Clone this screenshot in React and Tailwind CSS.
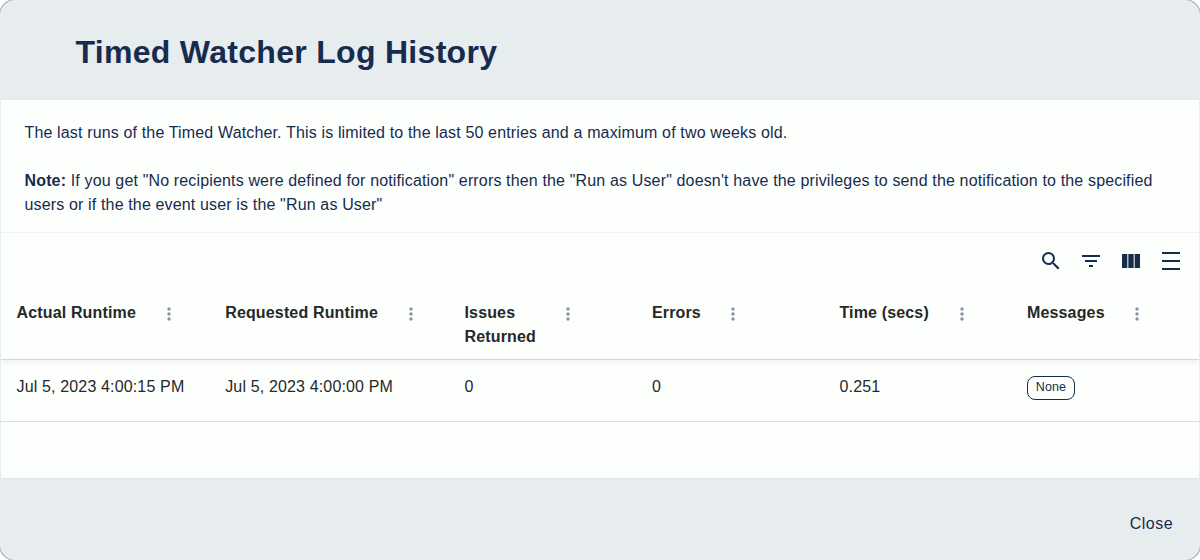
import { MdDensityMedium, MdFilterList, MdMoreVert, MdSearch } from "react-icons/md";

const columns = [
  { label: "Actual Runtime", menuGap: "ml-[23px]" },
  { label: "Requested Runtime", menuGap: "ml-[23px]" },
  { label: "Issues Returned", menuGap: "ml-[22px]", labelWidth: "w-[72px]" },
  { label: "Errors", menuGap: "ml-[22px]" },
  { label: "Time (secs)", menuGap: "ml-[23px]" },
  { label: "Messages", menuGap: "ml-[22px]" }
];

const runs = [
  { actual: "Jul 5, 2023 4:00:15 PM", requested: "Jul 5, 2023 4:00:00 PM", issues: 0, errors: 0, secs: "0.251", message: "None" }
];

const gridCols = "grid grid-cols-[208.7px_239.3px_187.5px_187.5px_187.5px_187.5px]";

function ColumnsIcon() {
  return (
    <svg width="24" height="24" viewBox="0 0 24 24" fill="currentColor">
      <path d="M14.67 5v14H9.33V5zm1 14H21V5h-5.33zm-7.34 0V5H3v14z" />
    </svg>
  );
}

function Toolbar() {
  return (
    <div className="flex h-14 items-center justify-end gap-4 pr-4 text-[#172b4d]">
      <button aria-label="Search"><MdSearch size={24} /></button>
      <button aria-label="Filter"><MdFilterList size={24} /></button>
      <button aria-label="Columns"><ColumnsIcon /></button>
      <button aria-label="Density"><MdDensityMedium size={24} /></button>
    </div>
  );
}

function RunsTable() {
  return (
    <div className="text-[#262829]">
      <div className={`${gridCols} h-[71px] border-b border-[#d3d6d6] pt-3 font-bold shadow-[0_3px_5px_rgba(0,0,0,0.05)]`}>
        {columns.map(({ label, menuGap, labelWidth = "" }) => (
          <div key={label} className="flex items-start pl-[15.5px]">
            <span className={labelWidth}>{label}</span>
            <button aria-label={`${label} actions`} className={`mt-[3px] text-[#172b4d] opacity-50 ${menuGap}`}>
              <MdMoreVert size={20} />
            </button>
          </div>
        ))}
      </div>
      {runs.map((run) => (
        <div key={run.actual} className={`${gridCols} h-[62px] border-b border-[#d9dcdc] pt-[15px] *:pl-[15.5px]`}>
          <div>{run.actual}</div>
          <div>{run.requested}</div>
          <div>{run.issues}</div>
          <div>{run.errors}</div>
          <div>{run.secs}</div>
          <div className="pt-px">
            <span className="flex h-6 w-12 items-center justify-center rounded-lg border border-[#172b4d] pb-0.5 text-[12.5px] tracking-[0.15px] text-[#172b4d]">
              {run.message}
            </span>
          </div>
        </div>
      ))}
    </div>
  );
}

export default function App() {
  return (
    <div className="h-[560px] w-[1200px] overflow-hidden bg-white font-['Liberation_Sans',Arial,sans-serif] text-base leading-6 tracking-[0.15px]">
      <div className="flex h-full flex-col overflow-hidden rounded-[15px] border border-[#e7ecef] bg-[#fdfffd] text-[#172b4d] shadow-[0_0_0_1px_rgba(0,0,0,0.3)]">
        <header className="flex h-[99px] items-center bg-[#e7ecef] pl-[74.5px] pt-[3px]">
          <h1 className="text-[32px] font-bold tracking-[0.3px]">Timed Watcher Log History</h1>
        </header>
        <section className="h-[133px] border-b border-[#f1f3f2] px-[23.5px] pt-[21px]">
          <p>The last runs of the Timed Watcher. This is limited to the last 50 entries and a maximum of two weeks old.</p>
          <p className="mt-6">
            <strong>Note:</strong> If you get "No recipients were defined for notification" errors then the "Run as User" doesn't have the privileges to send the notification to the specified users or if the the event user is the "Run as User"
          </p>
        </section>
        <section className="flex-1">
          <Toolbar />
          <RunsTable />
        </section>
        <footer className="flex h-[81px] items-center justify-end border-t border-[#e1e5e7] bg-[#e7ecef] pr-[26px] pt-2.5">
          <button className="tracking-[0.46px]">Close</button>
        </footer>
      </div>
    </div>
  );
}
